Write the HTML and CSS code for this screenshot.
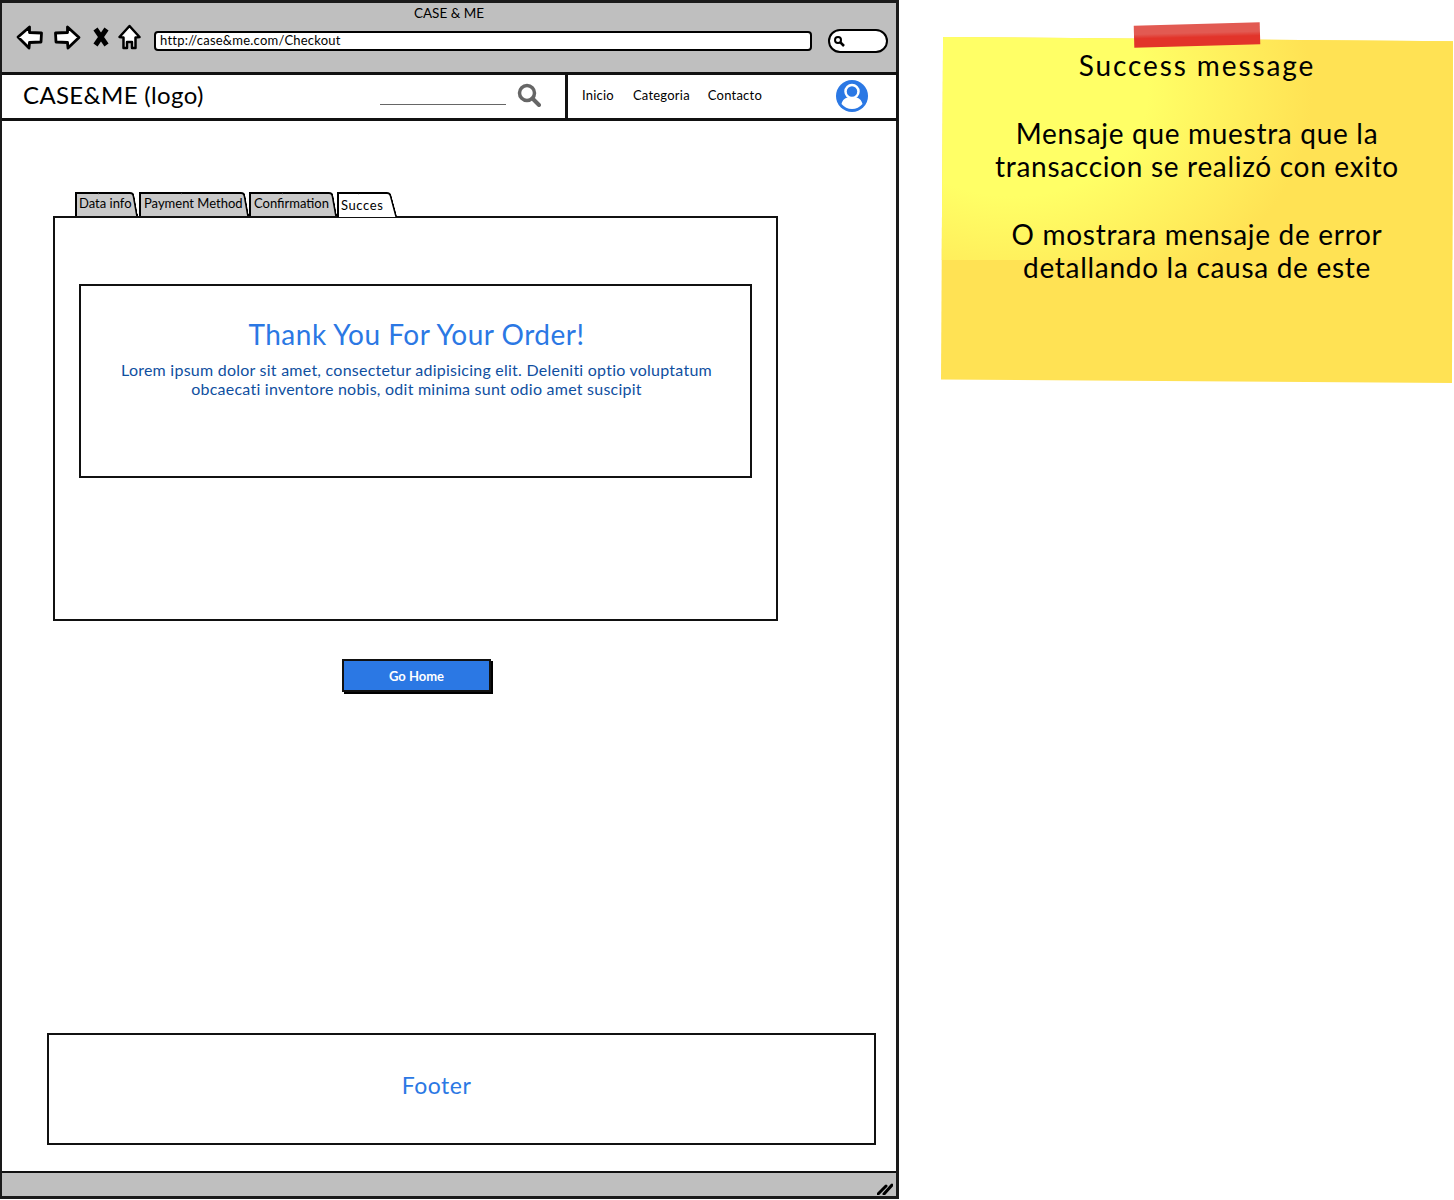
FILE: index.html
```html
<!DOCTYPE html>
<html>

<head>
    <title>CASE &amp; ME</title>
    <link rel="stylesheet" href="styles.css">
</head>

<body>
    <div class="browser">
        <div class="titlebar">
            <div class="window-title">CASE &amp; ME</div>
            <div class="toolbar">
                <svg class="tool tool-back" width="28" height="25" viewBox="0 0 28 25">
                    <path d="M2 12 13.500 2v5.500l12 .5-.5 9-11.500.5-.5 5.500z" fill="#fff" stroke="#000" stroke-width="2.800" stroke-linejoin="round"/>
                </svg>
                <svg class="tool tool-forward" width="28" height="25" viewBox="0 0 28 25">
                    <path d="M26 12.500 14.500 2v5.500l-12 .5.500 9 11.500.5.500 5.500z" fill="#fff" stroke="#000" stroke-width="2.800" stroke-linejoin="round"/>
                </svg>
                <svg class="tool tool-stop" width="16" height="20" viewBox="0 0 16 20">
                    <path d="M2.500 2 13.500 18M13.500 2 2.500 18" fill="none" stroke="#000" stroke-width="5"/>
                </svg>
                <svg class="tool tool-home" width="23" height="26" viewBox="0 0 23 26">
                    <path d="M11.500 2 21.500 13l-4 .5V24h-3.500v-6h-5v6H5.500V13.500l-4-.5z" fill="#fff" stroke="#000" stroke-width="2.500" stroke-linejoin="round"/>
                </svg>
                <div class="url">http://case&amp;me.com/Checkout</div>
                <div class="search-pill">
                    <svg width="12" height="12" viewBox="0 0 12 12">
                        <circle cx="5" cy="5" r="3" fill="none" stroke="#000" stroke-width="2"/>
                        <path d="M7 7l4 4" stroke="#000" stroke-width="2.500"/>
                    </svg>
                </div>
            </div>
        </div>

        <div class="header">
            <div class="header-left">
                <div class="logo">CASE&amp;ME (logo)</div>
                <div class="search-line"></div>
                <svg class="search-icon" width="24" height="24" viewBox="0 0 24 24">
                    <circle cx="10" cy="10" r="7.500" fill="none" stroke="#666" stroke-width="3.500"/>
                    <path d="M15.500 15.500 22 22" stroke="#666" stroke-width="4" stroke-linecap="round"/>
                </svg>
            </div>
            <div class="header-right">
                <a class="nav-link nav-inicio">Inicio</a>
                <a class="nav-link nav-categoria">Categoria</a>
                <a class="nav-link">Contacto</a>
                <svg class="avatar" width="32" height="32" viewBox="0 0 32 32">
                    <circle cx="16" cy="16" r="16" fill="#2b78e4"/>
                    <circle cx="16" cy="11.500" r="6.500" fill="#2b78e4" stroke="#fff" stroke-width="2.500"/>
                    <path d="M5.500 24c1-4.500 4-6 6.500-6.500 2.500 1.500 5.500 1.500 8 0 2.500.5 5.500 2 6.500 6.500-2.500 3-6.500 5-10.500 5s-8-2-10.500-5z" fill="#fff"/>
                </svg>
            </div>
        </div>

        <div class="main">
            <div class="tabs">
                <div class="tab">Data info</div>
                <div class="tab tab-payment">Payment Method</div>
                <div class="tab tab-confirm">Confirmation</div>
                <div class="tab tab-active">Succes</div>
            </div>
            <div class="panel">
                <div class="thanks">
                    <h1>Thank You For Your Order!</h1>
                    <p>Lorem ipsum dolor sit amet, consectetur adipisicing elit. Deleniti optio voluptatum<br>obcaecati inventore nobis, odit minima sunt odio amet suscipit</p>
                </div>
            </div>
            <button class="go-home">Go Home</button>
            <div class="footer">Footer</div>
        </div>

        <div class="statusbar">
            <svg width="16" height="13" viewBox="0 0 16 13">
                <path d="M1 12 9 4M7 12l8-9" stroke="#000" stroke-width="3" stroke-linecap="round"/>
            </svg>
        </div>
    </div>

    <div class="note">
        <div class="tape"></div>
        <div class="note-paper">
            <p class="note-title">Success message</p>
            <p>Mensaje que muestra que la<br>transaccion se realizó con exito</p>
            <p>O mostrara mensaje de error<br>detallando la causa de este</p>
        </div>
    </div>
</body>

</html>
```

FILE: styles.css
```css
body {
    margin: 0;
    display: flex;
    align-items: flex-start;
    background-color: #fff;
    color: #000;
    font-family: "Lato", "Liberation Sans", sans-serif;
}

.browser {
    width: 899px;
    height: 1199px;
    box-sizing: border-box;
    border: 3px solid #1a1a1a;
    border-left-width: 2px;
    display: flex;
    flex-direction: column;
}

/* title bar */
.titlebar {
    height: 69px;
    background-color: #bfbfbf;
    flex-shrink: 0;
}

.window-title {
    text-align: center;
    font-size: 13.500px;
    line-height: 16px;
    padding-top: 2px;
}

.toolbar {
    display: flex;
    align-items: flex-start;
    padding: 0 8px 0 14px;
    margin-top: 3px;
}

.tool {
    flex-shrink: 0;
}

.tool-back {
    margin-top: 1px;
}

.tool-forward {
    margin: 1px 0 0 9px;
}

.tool-stop {
    margin: 3px 0 0 12px;
}

.tool-home {
    margin-left: 9px;
}

.url {
    margin: 7px 0 0 13px;
    flex: 1;
    height: 20px;
    box-sizing: border-box;
    background-color: #fff;
    border: 2.500px solid #000;
    border-radius: 4px;
    padding-left: 4px;
    font-size: 13px;
    line-height: 15px;
    letter-spacing: 0.22px;
}

.search-pill {
    margin: 5px 0 0 16px;
    width: 60px;
    height: 24px;
    box-sizing: border-box;
    background-color: #fff;
    border: 2.500px solid #000;
    border-radius: 12px;
    padding: 4px 0 0 3px;
}

.search-pill svg {
    display: block;
}

/* page header */
.header {
    height: 49px;
    display: flex;
    flex-shrink: 0;
    margin-right: -2px;
}

.header-left {
    width: 563px;
    box-sizing: border-box;
    border-top: 3px solid #111;
    border-bottom: 3px solid #111;
    display: flex;
    align-items: center;
    padding: 0 0 4px 21px;
}

.logo {
    font-size: 24px;
    letter-spacing: 0.35px;
    width: 357px;
    flex-shrink: 0;
}

.search-line {
    width: 126px;
    height: 1px;
    background-color: #666;
    margin-top: 20px;
}

.search-icon {
    margin-left: 11px;
}

.header-right {
    flex: 1;
    box-sizing: border-box;
    border: 3px solid #111;
    border-right-width: 2px;
    display: flex;
    align-items: center;
    padding: 0 0 4px 14px;
    position: relative;
}

.nav-link {
    font-size: 13px;
    letter-spacing: 0.22px;
}

.nav-inicio {
    margin-right: 19px;
}

.nav-categoria {
    margin-right: 18px;
}

.avatar {
    margin: 2px 28px 0 auto;
}

/* main content */
.main {
    flex: 1;
    display: flex;
    flex-direction: column;
    align-items: flex-start;
    padding-top: 71px;
}

.tabs {
    display: flex;
    margin-left: 73px;
    margin-bottom: -1px;
    position: relative;
    z-index: 1;
}

.tab {
    position: relative;
    isolation: isolate;
    height: 24px;
    width: 63px;
    margin-right: 1px;
    box-sizing: border-box;
    padding: 2px 0 0 4px;
    font-size: 13px;
    line-height: 18px;
    white-space: nowrap;
    border-bottom: 2px solid #000;
}

.tab::before {
    content: "";
    position: absolute;
    z-index: -1;
    left: 0;
    right: 10px;
    top: 0;
    bottom: -2px;
    background-color: #c9c9c9;
    border: solid #000;
    border-width: 2px 0 0 2px;
}

.tab::after {
    content: "";
    position: absolute;
    z-index: -1;
    left: 40%;
    right: 2px;
    top: 0;
    bottom: -2px;
    background-color: #c9c9c9;
    border: solid #000;
    border-width: 2px 2px 0 0;
    border-top-right-radius: 4px;
    transform: skewX(10deg);
}

.tab-payment {
    width: 110px;
    margin-right: 0;
    padding-left: 5px;
}

.tab-confirm {
    width: 88px;
    margin-right: 0;
    padding-left: 5px;
}

.tab-active {
    width: 60px;
    height: 25px;
    padding: 4px 0 0 4px;
    border-bottom: none;
    letter-spacing: 0.6px;
}

.tab-active::before,
.tab-active::after {
    background-color: #fff;
    bottom: 0;
}

.tab-active::after {
    right: 3px;
    transform: skewX(15deg);
}

.panel {
    width: 725px;
    height: 405px;
    box-sizing: border-box;
    margin-left: 51px;
    border: 2px solid #111;
    padding: 66px 0 0 24px;
}

.thanks {
    width: 673px;
    height: 194px;
    box-sizing: border-box;
    border: 2px solid #111;
    text-align: center;
    padding: 31px 0 0 2px;
}

.thanks h1 {
    margin: 0 0 9px 0;
    font-size: 28px;
    line-height: 34px;
    font-weight: 400;
    letter-spacing: 0.5px;
    color: #2b78e4;
}

.thanks p {
    margin: 0;
    font-size: 16px;
    line-height: 19px;
    letter-spacing: 0.24px;
    color: #0f4f9f;
}

.go-home {
    margin: 38px 0 0 340px;
    width: 149px;
    height: 33px;
    box-sizing: border-box;
    background-color: #2b78e4;
    border: 2px solid #111;
    box-shadow: 2px 2px 0 #000;
    color: #fff;
    font-family: inherit;
    font-size: 13px;
    font-weight: 700;
    padding: 0;
}

.footer {
    margin: auto 0 26px 45px;
    width: 829px;
    height: 112px;
    box-sizing: border-box;
    border: 2px solid #111;
    padding: 36px 50px 0 0;
    text-align: center;
    font-size: 23px;
    line-height: 28px;
    letter-spacing: 0.5px;
    color: #2b78e4;
}

.statusbar {
    height: 25px;
    flex-shrink: 0;
    background-color: #bfbfbf;
    border-top: 2px solid #111;
    box-sizing: border-box;
    display: flex;
    justify-content: flex-end;
    align-items: flex-end;
    padding: 0 3px 1px 0;
}

/* sticky note */
.note {
    position: relative;
    margin: 37px 0 0 42px;
    width: 512px;
    height: 346px;
}

.note-paper {
    box-sizing: border-box;
    height: 100%;
    padding-top: 12px;
    clip-path: polygon(0.4% 0, 100% 1.200%, 99.800% 100%, 0 99%);
    background-color: #ffe254;
    background-image: radial-gradient(ellipse 300px 230px at 14% 25%, #ffff66 45%, #ffe254 100%);
    background-size: 100% 223px;
    background-repeat: no-repeat;
    text-align: center;
    font-size: 28px;
    line-height: 33.500px;
    letter-spacing: 0.7px;
}

.note-paper p {
    margin: 0 0 34px 0;
}

.note-paper .note-title {
    letter-spacing: 1.900px;
}

.tape {
    position: absolute;
    z-index: 1;
    left: 193px;
    top: -13px;
    width: 126px;
    height: 22px;
    background: linear-gradient(#e25a52 0%, #e25a52 40%, #e2342a 60%, #e2342a 100%);
    transform: rotate(-1.500deg);
}
```
